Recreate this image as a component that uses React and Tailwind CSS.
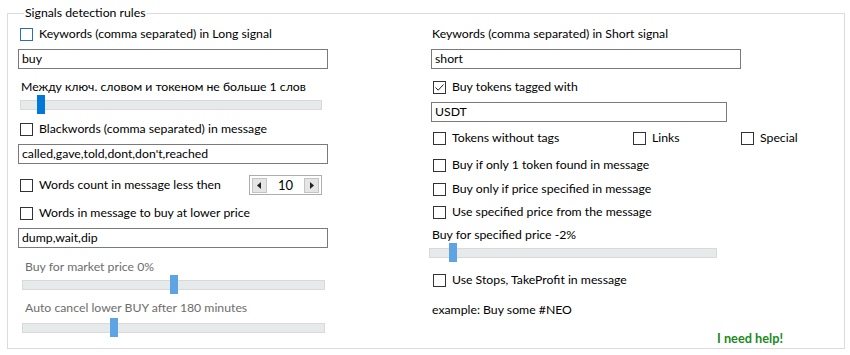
import React from 'react';

const Check = ({ checked, blue }) => (
    <span className={`w-[13px] h-[13px] shrink-0 border bg-white flex items-center justify-center ${blue ? 'border-[#2672b8]' : 'border-[#333333]'}`}>
        {checked && (
            <svg width="11" height="11" viewBox="0 0 11 11">
                <path d="M1.5 5.5 L4.2 8.2 L9.5 2.5" fill="none" stroke="#222" strokeWidth="1" />
            </svg>
        )}
    </span>
);

const CheckRow = ({ label, checked, blue, className = '' }) => (
    <div className={`flex items-center h-[16px] gap-[6px] pl-[2px] ${className}`}>
        <Check checked={checked} blue={blue} />
        <span className="whitespace-nowrap">{label}</span>
    </div>
);

const TextBox = ({ value, className = '' }) => (
    <div className={`h-[20px] border border-[#7a7a7a] bg-white pl-[3px] flex items-center whitespace-nowrap ${className}`}>
        {value}
    </div>
);

// slider: track + thumb (thumb sits over the track)
const Slider = ({ trackClass, thumbClass, thumbColor, height = 'h-[20px]' }) => (
    <div className={`${height} relative`}>
        <div className={`absolute top-[5px] h-[10px] bg-[#e7eaea] border border-[#d9d9d9] ${trackClass}`}></div>
        <div className={`absolute top-0 w-[8px] h-[19px] ${thumbColor} ${thumbClass}`}></div>
    </div>
);

const App = () => {
    return (
        <div className="w-[850px] h-[355px] bg-white pt-[13px] pl-[7px] text-[12.25px] leading-[16px] text-black font-['Segoe_UI','Lato','Noto_Sans',sans-serif] overflow-hidden">
            <div className="w-[838px] h-[336px] border border-[#dcdcdc]">
                <div className="-mt-[9px] ml-[16px] px-[1px] bg-white w-fit h-[16px]">Signals detection rules</div>

                <div className="flex">
                    {/* left column */}
                    <div className="ml-[10px] w-[310px] flex flex-col">
                        <CheckRow label="Keywords (comma separated) in Long signal" blue className="mt-[5px]" />
                        <TextBox value="buy" className="mt-[7px]" />
                        <div className="mt-[10px] h-[16px] pl-[3px]">Между ключ. словом и токеном не больше 1 слов</div>
                        <Slider trackClass="left-[2px] w-[302px]" thumbClass="left-[19px]" thumbColor="bg-[#0078d7]" />
                        <CheckRow label="Blackwords (comma separated) in message" className="mt-[6px]" />
                        <TextBox value="called,gave,told,dont,don't,reached" className="mt-[7px]" />
                        <div className="mt-[11px] h-[20px] flex items-center">
                            <CheckRow label="Words count in message less then" className="w-[231px]" />
                            <div className="w-[73px] h-[20px] border border-[#adadad] flex items-center px-[2px] gap-[2px]">
                                <div className="w-[15px] h-[15px] bg-[#e5e5e5] border border-[#c4c4c4] flex items-center justify-center">
                                    <svg width="5" height="7" viewBox="0 0 5 7"><path d="M4 0 L0 3.5 L4 7 Z" fill="#222" /></svg>
                                </div>
                                <div className="flex-1 text-center text-[13px]">10</div>
                                <div className="w-[15px] h-[15px] bg-[#e5e5e5] border border-[#c4c4c4] flex items-center justify-center">
                                    <svg width="5" height="7" viewBox="0 0 5 7"><path d="M1 0 L5 3.5 L1 7 Z" fill="#222" /></svg>
                                </div>
                            </div>
                        </div>
                        <CheckRow label="Words in message to buy at lower price" className="mt-[10px]" />
                        <TextBox value="dump,wait,dip" className="mt-[7px]" />
                        <div className="mt-[11px] h-[16px] pl-[7px] text-[#6d6d6d]">Buy for market price 0%</div>
                        <Slider trackClass="left-[4px] w-[303px]" thumbClass="left-[152px]" thumbColor="bg-[#5ea3e4]" />
                        <div className="mt-[5px] h-[16px] pl-[7px] text-[#6d6d6d]">Auto cancel lower BUY after 180 minutes</div>
                        <Slider trackClass="left-[4px] w-[303px]" thumbClass="left-[92px]" thumbColor="bg-[#5ea3e4]" height="h-[20px] mt-[2px]" />
                    </div>

                    {/* right column */}
                    <div className="ml-[103px] w-[400px] flex flex-col">
                        <div className="mt-[5px] h-[16px] pl-[1px]">Keywords (comma separated) in Short signal</div>
                        <TextBox value="short" className="mt-[7px] w-[310px]" />
                        <CheckRow label="Buy tokens tagged with" checked className="mt-[10px]" />
                        <TextBox value="USDT" className="mt-[7px] w-[296px]" />
                        <div className="mt-[8px] flex">
                            <CheckRow label="Tokens without tags" className="w-[200px]" />
                            <CheckRow label="Links" className="w-[108px]" />
                            <CheckRow label="Special" />
                        </div>
                        <CheckRow label="Buy if only 1 token found in message" className="mt-[11px]" />
                        <CheckRow label="Buy only if price specified in message" className="mt-[8px]" />
                        <CheckRow label="Use specified price from the message" className="mt-[7px]" />
                        <div className="mt-[7px] h-[16px] pl-[1px]">Buy for specified price -2%</div>
                        <Slider trackClass="-left-[2px] w-[288px]" thumbClass="left-[18px]" thumbColor="bg-[#5ea3e4]" />
                        <CheckRow label="Use Stops, TakeProfit in message" className="mt-[9px]" />
                        <div className="mt-[14px] h-[16px] pl-[1px]">example: Buy some #NEO</div>
                        <div className="mt-[12px] h-[16px] ml-[286px] text-[12.75px] font-bold text-[#1c8a1c] whitespace-nowrap">I need help!</div>
                    </div>
                </div>
            </div>
        </div>
    );
};

export default App;
